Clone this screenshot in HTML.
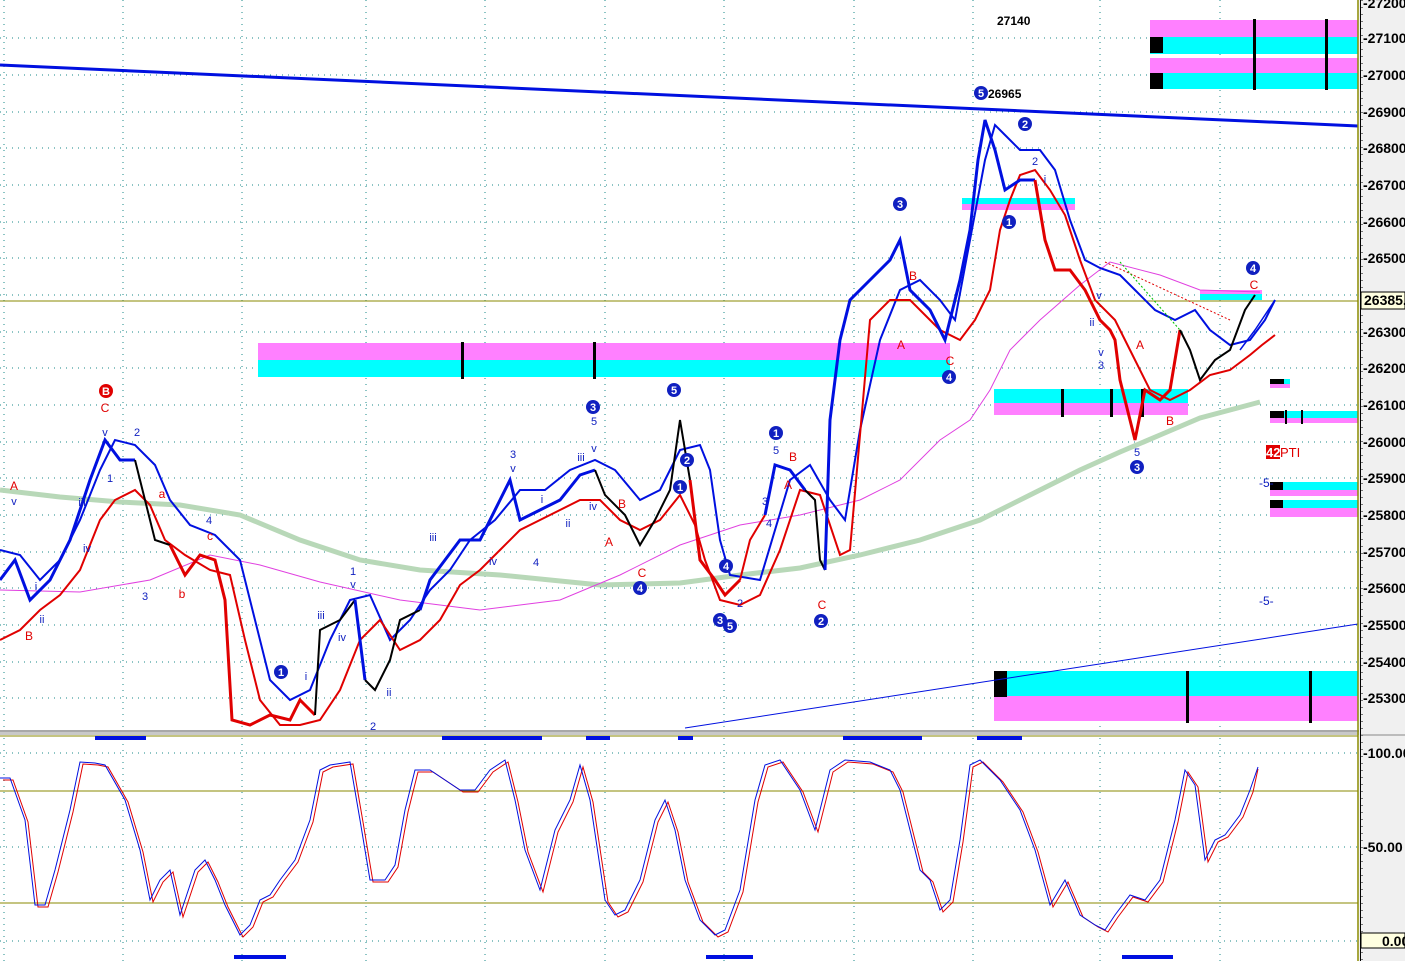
<!DOCTYPE html>
<html><head><meta charset="utf-8"><style>
html,body{margin:0;padding:0;background:#fff;width:1405px;height:961px;overflow:hidden}
svg{display:block;font-family:"Liberation Sans",sans-serif}
</style></head><body>
<svg width="1405" height="961" viewBox="0 0 1405 961" xmlns="http://www.w3.org/2000/svg">
<rect width="1405" height="961" fill="#fff"/>
<!-- grid -->
<g stroke="#1a8a8a" stroke-width="1" stroke-dasharray="1,5">
<line x1="0" y1="38" x2="1358" y2="38"/><line x1="0" y1="75" x2="1358" y2="75"/><line x1="0" y1="112" x2="1358" y2="112"/><line x1="0" y1="148" x2="1358" y2="148"/><line x1="0" y1="185" x2="1358" y2="185"/><line x1="0" y1="222" x2="1358" y2="222"/><line x1="0" y1="258" x2="1358" y2="258"/><line x1="0" y1="295" x2="1358" y2="295"/><line x1="0" y1="332" x2="1358" y2="332"/><line x1="0" y1="368" x2="1358" y2="368"/><line x1="0" y1="405" x2="1358" y2="405"/><line x1="0" y1="442" x2="1358" y2="442"/><line x1="0" y1="478" x2="1358" y2="478"/><line x1="0" y1="515" x2="1358" y2="515"/><line x1="0" y1="552" x2="1358" y2="552"/><line x1="0" y1="588" x2="1358" y2="588"/><line x1="0" y1="625" x2="1358" y2="625"/><line x1="0" y1="662" x2="1358" y2="662"/><line x1="0" y1="698" x2="1358" y2="698"/>
<line x1="0" y1="753" x2="1358" y2="753"/><line x1="0" y1="847" x2="1358" y2="847"/><line x1="0" y1="941" x2="1358" y2="941"/>
<line x1="4" y1="0" x2="4" y2="961"/><line x1="123" y1="0" x2="123" y2="961"/><line x1="242" y1="0" x2="242" y2="961"/><line x1="366" y1="0" x2="366" y2="961"/><line x1="485" y1="0" x2="485" y2="961"/><line x1="605" y1="0" x2="605" y2="961"/><line x1="724" y1="0" x2="724" y2="961"/><line x1="854" y1="0" x2="854" y2="961"/><line x1="973" y1="0" x2="973" y2="961"/><line x1="1100" y1="0" x2="1100" y2="961"/><line x1="1220" y1="0" x2="1220" y2="961"/>
</g>
<!-- zones -->
<rect x="258" y="343" width="692" height="17" fill="#ff80ff"/><rect x="258" y="360" width="692" height="17" fill="#00ffff"/>
<rect x="461" y="342" width="3" height="37" fill="#000"/><rect x="593" y="342" width="3" height="37" fill="#000"/>
<rect x="1150" y="20" width="208" height="17" fill="#ff80ff"/><rect x="1150" y="37" width="208" height="17" fill="#00ffff"/>
<rect x="1150" y="58" width="208" height="15" fill="#ff80ff"/><rect x="1150" y="73" width="208" height="16" fill="#00ffff"/>
<rect x="1150" y="37" width="13" height="16" fill="#000"/><rect x="1150" y="73" width="13" height="16" fill="#000"/>
<rect x="1253" y="19" width="3" height="71" fill="#000"/><rect x="1325" y="19" width="3" height="71" fill="#000"/>
<rect x="962" y="198" width="113" height="6" fill="#00ffff"/><rect x="962" y="204" width="113" height="6" fill="#ff80ff"/>
<rect x="994" y="389" width="194" height="14" fill="#00ffff"/><rect x="994" y="403" width="194" height="12" fill="#ff80ff"/>
<rect x="1061" y="389" width="3" height="28" fill="#000"/><rect x="1110" y="389" width="3" height="28" fill="#000"/><rect x="1141" y="389" width="3" height="28" fill="#000"/>
<rect x="994" y="671" width="364" height="25" fill="#00ffff"/><rect x="994" y="696" width="364" height="25" fill="#ff80ff"/>
<rect x="994" y="671" width="13" height="26" fill="#000"/><rect x="1186" y="671" width="3" height="52" fill="#000"/><rect x="1309" y="671" width="3" height="52" fill="#000"/>
<rect x="1270" y="379" width="20" height="5" fill="#00ffff"/><rect x="1270" y="379" width="14" height="5" fill="#000"/><rect x="1270" y="384" width="20" height="4" fill="#ff80ff"/>
<rect x="1270" y="411" width="88" height="7" fill="#00ffff"/><rect x="1270" y="411" width="14" height="7" fill="#000"/><rect x="1270" y="418" width="88" height="5" fill="#ff80ff"/>
<rect x="1285" y="410" width="2" height="14" fill="#000"/><rect x="1301" y="410" width="2" height="14" fill="#000"/>
<rect x="1270" y="482" width="88" height="8" fill="#00ffff"/><rect x="1270" y="482" width="13" height="8" fill="#000"/><rect x="1270" y="490" width="88" height="6" fill="#ff80ff"/>
<rect x="1270" y="500" width="88" height="8" fill="#00ffff"/><rect x="1270" y="500" width="13" height="8" fill="#000"/><rect x="1270" y="508" width="88" height="9" fill="#ff80ff"/>
<rect x="1200" y="290" width="62" height="8" fill="#ff80ff"/><rect x="1200" y="294" width="62" height="6" fill="#00ffff"/>
<line x1="0" y1="301" x2="1358" y2="301" stroke="#8a8a00" stroke-width="1"/>
<line x1="0" y1="65" x2="1358" y2="126" stroke="#0010e0" stroke-width="3"/>
<line x1="685" y1="728" x2="1358" y2="624" stroke="#0010e0" stroke-width="1"/>
<polyline fill="none" stroke="#b8d8b8" stroke-width="5" points="0,490 60,497 120,502 180,505 240,515 300,540 360,560 420,570 500,575 600,585 680,583 740,575 800,568 860,555 920,540 980,520 1030,495 1080,470 1120,452 1160,435 1200,418 1260,402"/>
<polyline fill="none" stroke="#e040e0" stroke-width="1" points="0,590 80,592 150,580 210,555 260,565 320,582 400,600 480,610 560,600 620,575 680,545 740,525 800,515 860,500 900,480 940,440 970,420 990,390 1010,350 1040,320 1080,285 1110,262 1160,275 1200,290 1260,292"/>
<polyline fill="none" stroke="#0010e0" stroke-width="2" points="0,550 20,555 40,580 60,560 80,520 100,470 115,440 135,445 155,465 170,500 190,525 215,535 240,560 255,620 270,680 290,700 310,690 330,640 350,600 370,595 390,640 410,620 430,590 450,570 470,540 495,520 520,490 545,490 570,470 595,460 615,470 640,500 660,490 680,450 700,445 710,470 720,540 730,575 760,580 790,480 810,465 830,500 845,520 860,430 880,340 900,290 920,280 940,300 955,320 970,240 985,160 995,125 1005,135 1020,150 1040,150 1055,170 1070,220 1085,260 1100,268 1120,275 1135,290 1155,310 1175,320 1195,310 1210,330 1230,345 1250,340 1265,320 1275,300"/>
<polyline fill="none" stroke="#e00000" stroke-width="2" points="0,640 20,630 40,610 60,595 80,570 100,520 115,500 135,490 150,505 165,540 185,555 210,570 230,575 245,640 260,700 280,725 300,725 320,720 340,690 360,640 380,620 400,650 420,640 440,620 460,585 480,570 500,550 520,530 540,520 560,510 580,500 600,500 620,520 640,530 660,520 680,495 695,525 705,560 720,600 740,605 760,595 780,550 800,490 820,495 840,555 850,550 870,320 890,300 910,300 940,330 960,340 975,320 990,290 1000,230 1010,200 1020,175 1035,170 1050,190 1065,215 1080,260 1095,300 1115,320 1130,350 1150,390 1170,400 1190,390 1210,375 1230,370 1250,355 1262,345 1275,335"/>
<polyline fill="none" stroke="#0010e0" stroke-width="3" points="0,580 15,560 30,600 50,580 70,540 90,480 105,440 120,460 135,460"/>
<polyline fill="none" stroke="#000" stroke-width="2" points="135,460 145,500 155,540 170,545"/>
<polyline fill="none" stroke="#e00000" stroke-width="3" points="170,545 185,575 200,555 215,560 225,600 232,720 250,725 270,715 290,720 300,700 315,715"/>
<polyline fill="none" stroke="#000" stroke-width="2" points="315,715 320,630 340,620 355,600"/>
<polyline fill="none" stroke="#0010e0" stroke-width="3" points="355,600 365,680"/>
<polyline fill="none" stroke="#000" stroke-width="2" points="365,680 375,690 390,660 400,620 420,610"/>
<polyline fill="none" stroke="#0010e0" stroke-width="3" points="420,610 430,580 445,560 460,540 480,540 500,500 510,480 520,520 540,510 560,500 580,475 595,470"/>
<polyline fill="none" stroke="#000" stroke-width="2" points="595,470 605,495 625,515 640,545 655,520 670,490 680,420 690,480"/>
<polyline fill="none" stroke="#e00000" stroke-width="3" points="690,480 700,560 715,580 725,595 740,580"/>
<polyline fill="none" stroke="#e00000" stroke-width="2" points="740,580 750,540 765,515"/>
<polyline fill="none" stroke="#0010e0" stroke-width="3" points="765,515 775,465 790,470 805,490"/>
<polyline fill="none" stroke="#000" stroke-width="2" points="805,490 815,500 820,560 825,570"/>
<polyline fill="none" stroke="#0010e0" stroke-width="3" points="825,570 830,420 840,340 850,300 870,280 890,260 900,240 910,290 930,310 945,340 960,280 970,230 978,160 985,120 995,150 1005,190 1020,180 1035,180"/>
<polyline fill="none" stroke="#e00000" stroke-width="3" points="1035,180 1045,240 1055,270 1070,270 1085,290 1100,320 1110,330 1115,340 1120,380 1135,440 1145,390 1160,400 1170,390 1180,330"/>
<polyline fill="none" stroke="#000" stroke-width="2" points="1180,330 1190,350 1200,380 1215,360 1230,350 1245,310 1255,295"/>
<polyline fill="none" stroke="#0010e0" stroke-width="1.5" points="1240,350 1255,330 1275,300"/>
<line x1="1105" y1="262" x2="1230" y2="320" stroke="#e00000" stroke-dasharray="2,2"/>
<line x1="1120" y1="262" x2="1180" y2="330" stroke="#00c000" stroke-dasharray="2,2"/>
<g font-size="11" font-weight="bold" text-anchor="middle" fill="#fff">
<g fill="#1020c0">
<circle cx="281" cy="672" r="7"/><circle cx="593" cy="407" r="7"/><circle cx="674" cy="390" r="7"/><circle cx="776" cy="433" r="7"/><circle cx="900" cy="204" r="7"/><circle cx="981" cy="93" r="7"/><circle cx="1025" cy="124" r="7"/><circle cx="1009" cy="222" r="7"/><circle cx="949" cy="377" r="7"/><circle cx="640" cy="588" r="7"/><circle cx="821" cy="621" r="7"/><circle cx="720" cy="620" r="7"/><circle cx="730" cy="626" r="7"/><circle cx="1137" cy="467" r="7"/><circle cx="1253" cy="268" r="7"/><circle cx="726" cy="566" r="7"/><circle cx="687" cy="460" r="7"/><circle cx="680" cy="487" r="7"/>
</g>
<circle cx="106" cy="391" r="7" fill="#e00000"/>
<text x="281" y="676">1</text><text x="593" y="411">3</text><text x="674" y="394">5</text><text x="776" y="437">1</text><text x="900" y="208">3</text><text x="981" y="97">5</text><text x="1025" y="128">2</text><text x="1009" y="226">1</text><text x="949" y="381">4</text><text x="640" y="592">4</text><text x="821" y="625">2</text><text x="720" y="624">3</text><text x="730" y="630">5</text><text x="1137" y="471">3</text><text x="1253" y="272">4</text><text x="726" y="570">4</text><text x="687" y="464">2</text><text x="680" y="491">1</text><text x="106" y="395">B</text>
</g>
<g font-size="12" text-anchor="middle" fill="#e00000">
<text x="14" y="490">A</text><text x="29" y="640">B</text><text x="105" y="412">C</text><text x="162" y="498">a</text><text x="182" y="598">b</text><text x="210" y="540">c</text><text x="609" y="546">A</text><text x="622" y="508">B</text><text x="642" y="577">C</text><text x="793" y="461">B</text><text x="788" y="489">A</text><text x="822" y="609">C</text><text x="901" y="349">A</text><text x="913" y="280">B</text><text x="950" y="365">C</text><text x="1140" y="349">A</text><text x="1170" y="425">B</text><text x="1254" y="289">C</text>
</g>
<g font-size="11" text-anchor="middle" fill="#1020c0">
<text x="14" y="505">v</text><text x="36" y="590">i</text><text x="42" y="623">ii</text><text x="82" y="506">iii</text><text x="87" y="552">iv</text><text x="105" y="436">v</text><text x="110" y="482">1</text><text x="137" y="436">2</text><text x="145" y="600">3</text><text x="209" y="524">4</text><text x="306" y="680">i</text><text x="321" y="619">iii</text><text x="342" y="641">iv</text><text x="353" y="575">1</text><text x="353" y="588">v</text><text x="389" y="696">ii</text><text x="373" y="730">2</text><text x="433" y="541">iii</text><text x="493" y="565">iv</text><text x="513" y="458">3</text><text x="513" y="472">v</text><text x="542" y="503">i</text><text x="568" y="527">ii</text><text x="536" y="566">4</text><text x="581" y="461">iii</text><text x="594" y="425">5</text><text x="594" y="452">v</text><text x="593" y="510">iv</text><text x="776" y="454">5</text><text x="765" y="505">3</text><text x="769" y="527">4</text><text x="740" y="607">2</text><text x="1035" y="165">2</text><text x="1045" y="183">i</text><text x="1099" y="299">v</text><text x="1092" y="326">ii</text><text x="1101" y="356">v</text><text x="1101" y="369">3</text><text x="1137" y="456">5</text>
</g>
<text x="997" y="25" font-size="12" font-weight="bold">27140</text>
<text x="988" y="98" font-size="12" font-weight="bold">26965</text>
<rect x="1266" y="445" width="14" height="14" fill="#e00000"/>
<text x="1266" y="457" font-size="13" fill="#fff" font-weight="bold">42</text><text x="1280" y="457" font-size="13" fill="#e00000">PTI</text>
<text x="1259" y="487" font-size="12" fill="#1020c0">-5-</text>
<text x="1259" y="605" font-size="12" fill="#1020c0">-5-</text>
<rect x="0" y="730" width="1405" height="5" fill="#c8c8c8"/>
<line x1="0" y1="731" x2="1405" y2="731" stroke="#888"/>
<line x1="0" y1="736" x2="1358" y2="736" stroke="#8a8a00"/>
<g fill="#0010e0">
<rect x="95" y="736" width="51" height="4"/><rect x="442" y="736" width="100" height="4"/><rect x="586" y="736" width="24" height="4"/><rect x="678" y="736" width="15" height="4"/><rect x="843" y="736" width="79" height="4"/><rect x="977" y="736" width="45" height="4"/>
<rect x="234" y="955" width="52" height="4"/><rect x="706" y="955" width="47" height="4"/><rect x="1122" y="955" width="51" height="4"/>
</g>
<line x1="0" y1="791" x2="1358" y2="791" stroke="#8a8a00"/>
<line x1="0" y1="903" x2="1358" y2="903" stroke="#8a8a00"/>
<polyline fill="none" stroke="#e00000" stroke-width="1" transform="translate(3,2)" points="0,778 10,778 25,820 35,905 45,905 55,870 70,810 80,762 95,763 105,765 125,800 140,850 150,900 160,880 170,870 180,915 195,870 205,860 215,880 225,905 240,935 250,925 260,900 270,895 280,880 295,860 310,820 320,770 330,765 350,762 360,820 370,880 385,880 395,865 405,810 415,770 430,770 445,780 460,790 475,790 490,770 505,760 515,800 525,850 540,890 555,830 570,800 580,765 590,800 605,900 615,915 625,910 640,880 655,820 665,800 675,830 685,880 700,920 715,935 725,930 740,890 755,800 765,765 780,760 800,790 815,830 830,770 845,760 870,762 890,770 900,790 910,830 920,870 930,880 940,910 950,900 960,840 970,765 980,760 1000,780 1020,810 1035,850 1050,905 1065,880 1080,915 1095,925 1105,930 1115,915 1130,895 1145,900 1160,880 1175,820 1185,770 1195,785 1205,860 1215,840 1225,835 1240,815 1250,790 1255,767"/>
<polyline fill="none" stroke="#0010e0" stroke-width="1" points="0,778 10,778 25,820 35,905 45,905 55,870 70,810 80,762 95,763 105,765 125,800 140,850 150,900 160,880 170,870 180,915 195,870 205,860 215,880 225,905 240,935 250,925 260,900 270,895 280,880 295,860 310,820 320,770 330,765 350,762 360,820 370,880 385,880 395,865 405,810 415,770 430,770 445,780 460,790 475,790 490,770 505,760 515,800 525,850 540,890 555,830 570,800 580,765 590,800 605,900 615,915 625,910 640,880 655,820 665,800 675,830 685,880 700,920 715,935 725,930 740,890 755,800 765,765 780,760 800,790 815,830 830,770 845,760 870,762 890,770 900,790 910,830 920,870 930,880 940,910 950,900 960,840 970,765 980,760 1000,780 1020,810 1035,850 1050,905 1065,880 1080,915 1095,925 1105,930 1115,915 1130,895 1145,900 1160,880 1175,820 1185,770 1195,785 1205,860 1215,840 1225,835 1240,815 1250,790 1258,767"/>
<!-- right axis -->
<rect x="1359" y="0" width="46" height="961" fill="#f0f0f0"/>
<line x1="1358" y1="0" x2="1358" y2="961" stroke="#8a8a00" stroke-width="1.5"/>
<line x1="1360.5" y1="0" x2="1360.5" y2="961" stroke="#000"/>
<line x1="1362" y1="0" x2="1362" y2="961" stroke="#000" stroke-dasharray="1,6"/>
<g font-size="14" font-weight="bold" fill="#000">
<text x="1363" y="8">-27200</text><text x="1363" y="43">-27100</text><text x="1363" y="80">-27000</text><text x="1363" y="117">-26900</text><text x="1363" y="153">-26800</text><text x="1363" y="190">-26700</text><text x="1363" y="227">-26600</text><text x="1363" y="263">-26500</text><text x="1363" y="337">-26300</text><text x="1363" y="373">-26200</text><text x="1363" y="410">-26100</text><text x="1363" y="447">-26000</text><text x="1363" y="483">-25900</text><text x="1363" y="520">-25800</text><text x="1363" y="557">-25700</text><text x="1363" y="593">-25600</text><text x="1363" y="630">-25500</text><text x="1363" y="667">-25400</text><text x="1363" y="703">-25300</text>
<text x="1363" y="758">-100.00</text><text x="1363" y="852">-50.00</text>
</g>
<rect x="1361" y="933" width="44" height="15" fill="#ffffe0" stroke="#000"/>
<text x="1382" y="946" font-size="14" font-weight="bold">0.00</text>
<rect x="1361" y="292" width="44" height="17" fill="#ffffe0" stroke="#000"/>
<text x="1364" y="305" font-size="14" font-weight="bold">26385.</text>
<line x1="1361" y1="735" x2="1405" y2="735" stroke="#888"/>
</svg>
</body></html>
